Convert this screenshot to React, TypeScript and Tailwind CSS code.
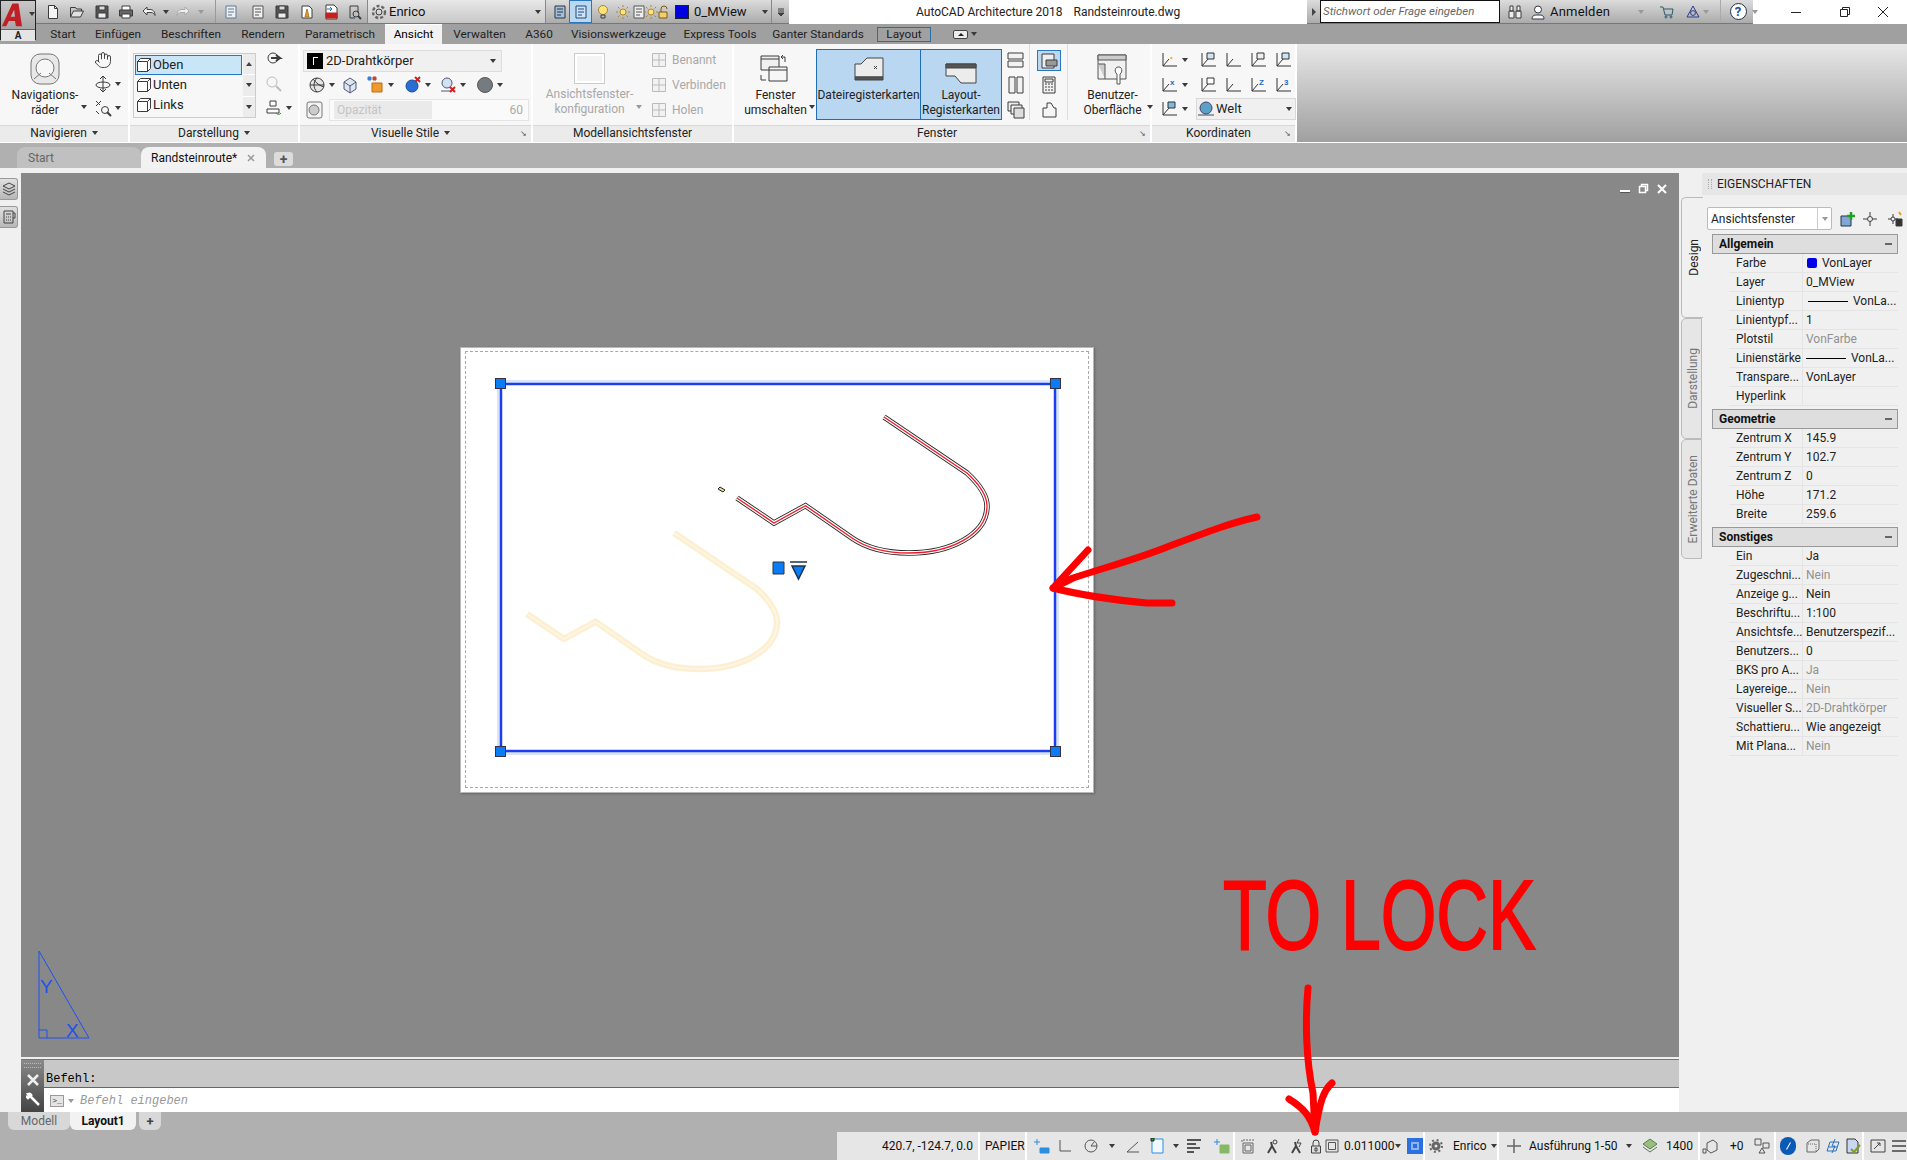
import type { ReactNode } from "react";
import { Hand } from "lucide-react";

type SvgProps = { w?: number; h?: number; className?: string; stroke?: string; children?: ReactNode };

const S = ({ w = 16, h = 16, className, stroke = "#3c3c3c", children }: SvgProps) => (
  <svg width={w} height={h} viewBox={`0 0 ${w} ${h}`} fill="none" stroke={stroke} strokeWidth="1" className={`shrink-0 ${className ?? ""}`}>
    {children}
  </svg>
);

const Dd = ({ light }: { light?: boolean }) => (
  <span className={`inline-block w-0 h-0 shrink-0 border-x-[3px] border-t-[4px] border-x-transparent ${light ? "border-t-[#999]" : "border-t-[#3a3a3a]"}`} />
);

// ---- little icons
const NewIco = () => <S><path d="M3.5 1.5h6l3 3v10h-9z" fill="#f4f4f4" /><path d="M9.5 1.5v3h3" /></S>;
const OpenIco = () => <S><path d="M1.5 13V3.5h5l1 1.5h5v2" /><path d="M1.5 13l3-6h10l-3 6z" fill="#e2e2e2" /></S>;
const SaveIco = () => <S><path d="M2 2h12v12H2z" fill="#555" /><path d="M5 2h6v4H5z" fill="#ddd" /><path d="M4 9h8v5H4z" fill="#eee" /></S>;
const PrintIco = () => <S><path d="M4 6V2h8v4" fill="#fff" /><path d="M1.5 6h13v6h-13z" fill="#666" /><path d="M4 10h8v4H4z" fill="#fff" /></S>;
const UndoIco = () => <S stroke="#444"><path d="M6 3L2 7l4 4V8.5h4c2 0 3 1 4 3 0-4-2-6-5-6H6z" fill="#f2f2f2" /></S>;
const RedoIco = () => <S stroke="#aaa"><path d="M10 3l4 4-4 4V8.5H6c-2 0-3 1-4 3 0-4 2-6 5-6h3z" fill="#eee" /></S>;
const Gear = () => <S w={18} h={18}><circle cx="9" cy="9" r="3" /><circle cx="9" cy="9" r="6" strokeDasharray="3 2" strokeWidth="2.4" stroke="#666" /></S>;
const Bulb = () => <S><circle cx="8" cy="6" r="4.5" fill="#ffe27a" stroke="#a58a2d" /><path d="M6 11h4v3H6z" fill="#bbb" /></S>;
const Sun = () => <S><circle cx="8" cy="8" r="3" fill="#ffe27a" stroke="#a58a2d" /><path d="M8 1v2M8 13v2M1 8h2M13 8h2M3 3l1.5 1.5M11.5 11.5L13 13M3 13l1.5-1.5M11.5 4.5L13 3" stroke="#a58a2d" /></S>;
const PageIco = ({ tone = "#555", fill = "#eee" }: { tone?: string; fill?: string }) => <S stroke={tone}><path d="M3 2h10v12H3z" fill={fill} /><path d="M5 5h6M5 8h6M5 11h4" /></S>;
const PdfIco = () => <S><path d="M3 1h8l3 3v11H3z" fill="#fff" /><path d="M3 9h11v5H3z" fill="#c4201c" stroke="#c4201c" /><path d="M4 5h5M7 3l2 2-2 2" stroke="#1f6fc4" /></S>;
const Cone = () => <S><path d="M3 2h7l3 3v9H3z" fill="#fff" /><path d="M6 13l2-8 2 8z" fill="#e0a030" stroke="#b07a20" /></S>;
const Search = () => <S><path d="M3 2h8v7" /><path d="M3 2v12h5" /><circle cx="9" cy="10" r="3" /><path d="M11 12l3 3" strokeWidth="2" /></S>;
const Lock = () => <S stroke="#7a5a10"><path d="M3 8h8v6H3z" fill="#f3cf70" /><path d="M5 8V5a3 3 0 016 0" /></S>;

const Slot = ({ className, children }: { className: string; children?: ReactNode }) => (
  <div className={`flex items-center justify-center shrink-0 ${className}`}>{children}</div>
);

function TitleBar() {
  return (
    <div className="flex h-[24px] shrink-0 bg-white text-[12px] text-[#111]">
      <div className="w-[36px] shrink-0" />
      <div className="w-[753px] shrink-0 flex items-center bg-gradient-to-b from-[#dcdcdc] to-[#ababab] border-b border-[#777]">
        <div className="w-[5px] shrink-0" />
        <Slot className="w-[24px]"><NewIco /></Slot>
        <Slot className="w-[24px]"><OpenIco /></Slot>
        <Slot className="w-[25px]"><SaveIco /></Slot>
        <Slot className="w-[24px]"><PrintIco /></Slot>
        <Slot className="w-[22px]"><UndoIco /></Slot>
        <Slot className="w-[11px]"><Dd /></Slot>
        <Slot className="w-[24px]"><RedoIco /></Slot>
        <Slot className="w-[12px]"><Dd light /></Slot>
        <div className="w-[9px] h-full border-r border-[#999] shrink-0" />
        <Slot className="w-[30px]"><PageIco tone="#5a7a9a" /></Slot>
        <Slot className="w-[24px]"><PageIco /></Slot>
        <Slot className="w-[24px]"><SaveIco /></Slot>
        <Slot className="w-[25px]"><Cone /></Slot>
        <Slot className="w-[24px]"><PdfIco /></Slot>
        <Slot className="w-[24px]"><Search /></Slot>
        <div className="w-[179px] shrink-0 h-full flex items-center bg-gradient-to-b from-[#e8e8e8] to-[#c8c8c8] border-x border-[#888] pl-[2px] pr-[4px]">
          <Gear />
          <span className="ml-[1px] flex-1 text-[13px]">Enrico</span>
          <Dd />
        </div>
        <div className="w-[4px] shrink-0" />
        <Slot className="w-[19px] h-full"><PageIco tone="#333" fill="#9fc0e0" /></Slot>
        <Slot className="w-[23px] h-full bg-[#bcd8f0] border border-[#2a76c0]"><PageIco tone="#1a4a80" fill="#cfe3f5" /></Slot>
        <Slot className="w-[22px]"><Bulb /></Slot>
        <Slot className="w-[18px]"><Sun /></Slot>
        <Slot className="w-[14px]"><PageIco /></Slot>
        <Slot className="w-[10px]"><Sun /></Slot>
        <Slot className="w-[16px]"><Lock /></Slot>
        <div className="w-[14px] h-[14px] shrink-0 bg-[#0000e0] border border-[#222] ml-[3px]" />
        <span className="ml-[5px] w-[68px] shrink-0 text-[13px]">0_MView</span>
        <Dd />
        <div className="w-[2px] ml-[2px] h-full border-r border-[#888] shrink-0" />
        <Slot className="flex-1 h-full"><S w={10} h={10}><path d="M2 2h6M2 4h6" /><path d="M2 6h6l-3 3z" fill="#444" /></S></Slot>
      </div>
      <div className="w-[518px] shrink-0 pl-[127px] flex items-center text-[#222]">
        <span>AutoCAD Architecture 2018</span>
        <span className="ml-[11px]">Randsteinroute.dwg</span>
      </div>
      <div className="w-[446px] shrink-0 flex items-center bg-gradient-to-b from-[#dcdcdc] to-[#ababab] border-b border-[#777]">
        <Slot className="w-[13px]"><span className="w-0 h-0 border-y-[4px] border-l-[4px] border-y-transparent border-l-[#444]" /></Slot>
        <div className="w-[180px] h-[23px] shrink-0 bg-white border border-[#111] pl-[2px] flex items-center italic text-[#666] text-[11.5px]">Stichwort oder Frage eingeben</div>
        <Slot className="w-[26px] ml-[2px]"><S><path d="M2 7h5v7H2zM9 7h5v7H9zM3 2h3v5H3zM10 2h3v5h-3z" fill="#eee" /></S></Slot>
        <Slot className="w-[20px]"><S stroke="#334"><circle cx="8" cy="5.5" r="3.5" fill="#fff" /><path d="M2 15c0-4 3-4 6-4s6 0 6 4z" fill="#fff" /></S></Slot>
        <span className="ml-[2px] w-[88px] shrink-0 text-[13px] tracking-[0.2px]">Anmelden</span>
        <Dd light />
        <Slot className="w-[32px] ml-[7px]"><S stroke="#2c5a6c"><path d="M1 3h3l2 8h7l1-6H5" /><circle cx="7" cy="13" r="1" /><circle cx="12" cy="13" r="1" /></S></Slot>
        <Slot className="w-[20px]"><S stroke="#2c3c8c"><path d="M8 2l6 11H2z" /><circle cx="8" cy="9" r="2.4" /></S></Slot>
        <Dd light />
        <div className="w-[12px] h-full border-r border-[#aaa] shrink-0" />
        <Slot className="w-[28px] ml-[3px]"><div className="w-[17px] h-[17px] rounded-full border border-[#234] bg-white text-[#1c4aa0] font-bold text-[13px] leading-[15px] text-center">?</div></Slot>
        <Dd light />
      </div>
      <div className="flex-1 flex items-center text-[#222]">
        <span className="ml-[38px] w-[10px] h-px bg-[#222]" />
        <div className="ml-[39px] w-[10px] h-[10px]"><S w={10} h={10} stroke="#222"><path d="M0.5 2.5h7v7h-7z" fill="#fff" /><path d="M2.5 2.5v-2h7v7h-2" /></S></div>
        <S w={12} h={12} stroke="#222" className="ml-[27px]"><path d="M1 1l10 10M11 1L1 11" /></S>
      </div>
    </div>
  );
}

function RibbonTabs() {
  const Tab = ({ label, className }: { label: string; className: string }) => (
    <div className={`h-full pt-px flex items-center justify-center shrink-0 ${className}`}>{label}</div>
  );
  return (
    <div className="flex h-[20px] shrink-0 bg-[#a0a0a0] text-[11.8px] text-[#222] pl-[41px]">
      <Tab label="Start" className="w-[44px]" />
      <Tab label="Einfügen" className="w-[66px]" />
      <Tab label="Beschriften" className="w-[80px]" />
      <Tab label="Rendern" className="w-[64px]" />
      <Tab label="Parametrisch" className="w-[90px]" />
      <Tab label="Ansicht" className="w-[57px] bg-[#f2f2f2] border-t border-white text-black" />
      <Tab label="Verwalten" className="w-[75px]" />
      <Tab label="A360" className="w-[44px]" />
      <Tab label="Visionswerkzeuge" className="w-[115px]" />
      <Tab label="Express Tools" className="w-[88px]" />
      <Tab label="Ganter Standards" className="w-[108px]" />
      <div className="w-[54px] shrink-0 ml-[5px] h-[15px] mt-[3px] border border-[#2a6fa8] flex items-center justify-center">Layout</div>
      <div className="ml-[22px] flex items-center gap-[3px]">
        <div className="w-[15px] h-[9px] rounded-[2px] bg-[#eee] border border-[#444] flex items-center justify-center"><span className="w-0 h-0 border-x-[3px] border-b-[3px] border-x-transparent border-b-[#222]" /></div>
        <Dd />
      </div>
    </div>
  );
}

function Panel({ title, className, arrow, titleDd, children }: { title: string; className: string; arrow?: boolean; titleDd?: boolean; children?: ReactNode }) {
  return (
    <div className={`flex flex-col shrink-0 h-full border-r-2 border-white ${className}`}>
      <div className="h-[81px] bg-[#f7f7f7] flex">{children}</div>
      <div className={`h-[17px] bg-[#ebebeb] border-t border-[#d8d8d8] pb-[2px] flex items-center justify-center relative text-[#222] ${arrow ? "pr-[10px]" : ""}`}>
        <span>{title}</span>
        {titleDd && <span className="ml-[5px] flex"><Dd /></span>}
        {arrow && <span className="absolute right-[4px] top-[4px] text-[8px] leading-[8px] text-[#555]">↘</span>}
      </div>
    </div>
  );
}

const LargeLabel = ({ a, b, gray }: { a: string; b: string; gray?: boolean }) => (
  <div className={`text-center leading-[15px] ${gray ? "text-[#a8a8a8]" : "text-[#222]"}`}>
    {a}<br />{b}
  </div>
);

const IconDd = ({ className, children }: { className: string; children: ReactNode }) => (
  <div className={`flex items-center gap-[3px] shrink-0 ${className}`}>{children}<Dd /></div>
);

const CoordIco = ({ fill, tag }: { fill?: string; tag?: string }) => (
  <S w={18} h={18} stroke="#333">
    <path d="M2 2v13h14" />
    <path d="M2 15l6-7" />
    {tag && <text x="9" y="9" fontSize="8" fontWeight="700" fill={fill ?? "#1a6ac8"} stroke="none" fontFamily="Liberation Sans">{tag}</text>}
    {!tag && fill && <path d="M7 2h7v6H7z" fill={fill} />}
  </S>
);

function Ribbon() {
  return (
    <div className="flex h-[98px] shrink-0 text-[12px] bg-white">
      <Panel title="Navigieren" titleDd className="w-[130px]">
        <div className="w-[90px] flex flex-col items-center pt-[9px] relative">
          <S w={32} h={32} stroke="#777"><rect x="2" y="1" width="28" height="30" rx="9" fill="#e8e8e8" /><circle cx="16" cy="15" r="9" fill="#f7f7f7" /><path d="M5 26l7-6M27 26l-7-6" /></S>
          <div className="mt-[3px]"><LargeLabel a="Navigations-" b="räder" /></div>
          <span className="absolute right-[3px] bottom-[16px] flex"><Dd /></span>
        </div>
        <div className="flex flex-col items-start pl-[4px] pt-[7px] gap-[6px]">
          <div className="h-[18px]"><Hand size={18} strokeWidth={1.2} color="#333" /></div>
          <IconDd className="h-[18px]"><S w={18} h={18}><path d="M9 1v16M6 4l3-3 3 3M6 14l3 3 3-3" /><ellipse cx="9" cy="10" rx="7" ry="3" /></S></IconDd>
          <IconDd className="h-[18px]"><S w={18} h={18}><path d="M2 2l4 4M7 2L2 7M2 12l3 3" /><circle cx="11" cy="11" r="3.500" /><path d="M13 13l4 4" strokeWidth="2" /></S></IconDd>
        </div>
      </Panel>
      <Panel title="Darstellung" titleDd className="w-[170px]">
        <div className="ml-[3px] mt-[9px] mb-[7px] w-[123px] border border-[#ccc] flex">
          <div className="w-[108px] flex flex-col text-[#222] pt-[1px] pl-[1px] text-[13px]">
            {["Oben", "Unten", "Links"].map((t, i) => (
              <div key={t} className={`h-[20px] flex items-center ${i === 0 ? "bg-[#c9e6f8] border border-[#2a76c0]" : "pl-px"}`}>
                <S><path d="M1.5 4.500l3-3h10v10l-3 3h-10z" fill="#fff" /><path d="M1.5 4.500h10v10M11.500 4.500l3-3" /></S>
                <span className="ml-[1px]">{t}</span>
              </div>
            ))}
          </div>
          <div className="flex-1 ml-px flex flex-col bg-[#ececec]">
            <div className="flex-1 flex items-center justify-center border-b border-white"><span className="w-0 h-0 border-x-[3px] border-b-[4px] border-x-transparent border-b-[#444]" /></div>
            <div className="flex-1 flex items-center justify-center border-b border-white"><Dd /></div>
            <div className="flex-1 flex items-center justify-center"><Dd /></div>
          </div>
        </div>
        <div className="flex flex-col pl-[9px] pt-[7px] gap-[6px]">
          <S w={18} h={18}><circle cx="8" cy="7" r="5" /><path d="M6 7h9l-4-3M11 10l4-3" strokeWidth="2" /></S>
          <S w={18} h={18} stroke="#bbb"><circle cx="7" cy="7" r="5" /><path d="M11 11l5 5" strokeWidth="2" /></S>
          <IconDd className="h-[18px]"><S w={18} h={18}><path d="M5 2h6v5H5zM2 10h12v4H2z" fill="#fff" /><path d="M11 14a3 3 0 005 0" stroke="#22a020" /></S></IconDd>
        </div>
      </Panel>
      <Panel title="Visuelle Stile" titleDd arrow className="w-[233px]">
        <div className="pl-[3px] pt-[6px] flex flex-col">
          <div className="w-[199px] h-[22px] bg-[#f0f0f0] border border-[#ddd] flex items-center pl-[3px] pr-[5px] text-[13px]">
            <div className="w-[16px] h-[16px] bg-black flex items-center justify-center"><span className="w-[5px] h-[8px] border-l border-t border-white" /></div>
            <span className="ml-[3px] flex-1 text-[#222]">2D-Drahtkörper</span>
            <Dd />
          </div>
          <div className="flex items-center mt-[4px] h-[18px] pl-[5px]">
            <IconDd className="w-[34px]"><S w={18} h={18}><circle cx="9" cy="9" r="7" fill="#e6e6e6" /><path d="M2 9h14M9 2c-4 4-4 10 0 14M5 3c3 4 7 7 11 8" /></S></IconDd>
            <S w={18} h={18} stroke="#557" className="ml-[-1px]"><path d="M3 6l6-4 6 4v7l-6 4-6-4z" fill="#dde7f0" /><path d="M3 6l6 4 6-4M9 10v7" /></S>
            <IconDd className="w-[37px] ml-[8px]"><S w={18} h={18} stroke="#c06a10"><path d="M5 7h10v9H5z" fill="#ef9a30" /><path d="M1 1h3v3H1z" fill="#3a7fd0" stroke="#3a7fd0" /><path d="M6 1h3v3H6z" fill="#d04030" stroke="#d04030" /></S></IconDd>
            <IconDd className="w-[34px]"><S w={18} h={18} stroke="#1a4aa0"><circle cx="8" cy="10" r="6" fill="#2a6fd0" /><path d="M11 1l5 5M16 1l-5 5" stroke="#d02020" strokeWidth="2" /></S></IconDd>
            <IconDd className="w-[37px] ml-[1px]"><S w={18} h={18} stroke="#557"><circle cx="8" cy="7" r="5" fill="#cfe3f5" /><path d="M2 15h9" /><path d="M11 11l5 5M16 11l-5 5" stroke="#d02020" strokeWidth="2" /></S></IconDd>
            <IconDd className="w-[30px]"><S w={18} h={18} stroke="#555"><circle cx="9" cy="9" r="7.500" fill="#747c82" /></S></IconDd>
          </div>
          <div className="flex items-center mt-[4px] h-[24px]">
            <S w={20} h={20} className="ml-[2px]" stroke="#777"><rect x="2" y="2" width="15" height="16" rx="2" fill="#f4f4f4" /><circle cx="9" cy="10" r="5" fill="#ccc" /></S>
            <div className="ml-[4px] w-[200px] h-[22px] bg-[#fafafa] border border-[#e4e4e4] flex items-center">
              <div className="ml-[4px] w-[98px] h-[18px] bg-[#eaeaea] pl-[3px] text-[#c4c4c4] flex items-center">Opazität</div>
              <span className="ml-auto mr-[5px] text-[#aaa]">60</span>
            </div>
          </div>
        </div>
      </Panel>
      <Panel title="Modellansichtsfenster" className="w-[201px]">
        <div className="w-[113px] flex flex-col items-center pt-[9px] relative shrink-0">
          <div className="w-[31px] h-[31px] bg-[#f4f4f4] border border-[#ccc] shadow-[inset_0_0_0_2px_#fff]" />
          <div className="mt-[3px]"><LargeLabel a="Ansichtsfenster-" b="konfiguration" gray /></div>
          <span className="absolute right-[4px] bottom-[16px] flex"><Dd light /></span>
        </div>
        <div className="flex flex-col pl-[5px] pt-[7px] gap-[7px] text-[#a8a8a8]">
          {["Benannt", "Verbinden", "Holen"].map((t) => (
            <div key={t} className="flex items-center h-[18px] gap-[5px]">
              <S stroke="#bbb"><path d="M1.500 1.500h13v13h-13zM8 1.500v13M1.500 8h13" fill="#f2f2f2" /></S>
              <span>{t}</span>
            </div>
          ))}
        </div>
      </Panel>
      <Panel title="Fenster" arrow className="w-[418px]">
        <div className="w-[82px] flex flex-col items-center pt-[9px] relative shrink-0">
          <S w={32} h={32}><path d="M2 3h18v14H2z" fill="#f0f0f0" /><path d="M2 6h18" /><path d="M10 14h18v14H10z" fill="#f6f6f6" /><path d="M10 17h18" /><path d="M26 9V4h-4M24 6l-2-2 2-2M2 22v5h5" /></S>
          <div className="mt-[3px] ml-[1px]"><LargeLabel a="Fenster" b="umschalten" /></div>
          <span className="absolute right-[1px] bottom-[16px] flex"><Dd /></span>
        </div>
        <div className="w-[105px] h-[71px] mt-[5px] bg-[#b9d7f1] border border-[#1f6fb8] flex flex-col items-center pt-[5px] shrink-0">
          <S w={32} h={28} stroke="#444"><path d="M2 9h6l6-6h16v19H2z" fill="#ececec" /><path d="M2 22h28v3H2z" fill="#555" /><path d="M21 11l3 3M24 11l-3 3" /></S>
          <span className="mt-[3px] text-[#222]">Dateiregisterkarten</span>
        </div>
        <div className="w-[81px] h-[71px] mt-[5px] bg-[#b9d7f1] border border-[#1f6fb8] border-l-0 flex flex-col items-center pt-[3px] shrink-0">
          <S w={32} h={28} stroke="#444" className="mt-[7px]"><path d="M1 4h30v19H16l-6-7H1z" fill="#ececec" /><path d="M1 4h30v4H1z" fill="#555" /></S>
          <LargeLabel a="Layout-" b="Registerkarten" />
        </div>
        <div className="w-[28px] flex flex-col items-center pt-[7px] gap-[7px] shrink-0 border-r border-[#ddd] mb-[5px]">
          <S w={18} h={18}><path d="M1 2h15v6H1zM1 10h15v6H1z" fill="#f2f2f2" /></S>
          <S w={18} h={18}><path d="M2 1h6v16H2zM10 1h6v16h-6z" fill="#f2f2f2" /></S>
          <S w={18} h={18}><path d="M1 1h11v9H1z" fill="#eee" /><path d="M4 4h11v9H4z" fill="#eee" /><path d="M7 7h10v10H7z" fill="#ddd" /></S>
        </div>
        <div className="w-[38px] flex flex-col items-center pt-[6px] gap-[5px] shrink-0 border-r border-[#ddd] mb-[5px]">
          <div className="w-[24px] h-[21px] bg-[#bcd8f0] border border-[#2a76c0] flex items-center justify-center"><S w={18} h={18}><path d="M2 2h12v14H2z" fill="#eee" /><path d="M6 8h11v6H6z" fill="#999" /></S></div>
          <S w={18} h={18}><path d="M3 1h12v16H3z" fill="#f2f2f2" /><path d="M5 3h8v3H5zM5 8h2M8 8h2M11 8h2M5 11h2M8 11h2M11 11h2M5 14h2M8 14h2M11 14h2" /></S>
          <S w={18} h={18} className="mt-[2px]"><path d="M3 7h4V2h4l3 5h2v9H3z" fill="#f5f5f5" /></S>
        </div>
        <div className="w-[84px] ml-[2px] flex flex-col items-center pt-[9px] relative shrink-0">
          <S w={32} h={32} stroke="#555"><path d="M2 2h28v24H2z" fill="#f1f1f1" /><path d="M2 2h28v5H2zM2 11h7v15" fill="#ccc" /><path d="M22 14c-3 0-4 5-1 7v10h3V21c3-2 2-7-1-7z" fill="#fff" /></S>
          <div className="mt-[3px] ml-[1px]"><LargeLabel a="Benutzer-" b="Oberfläche" /></div>
          <span className="absolute right-[1px] bottom-[16px] flex"><Dd /></span>
        </div>
      </Panel>
      <Panel title="Koordinaten" arrow className="w-[145px] border-r-0">
        <div className="flex flex-col pl-[9px] pt-[7px] gap-[7px] text-[#222]">
          <div className="flex items-center gap-[7px] h-[18px]">
            <IconDd className="w-[32px]"><CoordIco fill="#f0b030" tag="•" /></IconDd>
            <CoordIco fill="#cfe3f5" />
            <CoordIco />
            <CoordIco fill="#eee" />
            <CoordIco fill="#cfe3f5" />
          </div>
          <div className="flex items-center gap-[7px] h-[18px]">
            <IconDd className="w-[32px]"><CoordIco tag="x" /></IconDd>
            <CoordIco fill="#fff" />
            <CoordIco />
            <CoordIco tag="Z" />
            <CoordIco tag="3" />
          </div>
          <div className="flex items-center h-[22px] mt-[-3px]">
            <IconDd className="w-[35px]"><CoordIco fill="#7fb8e0" /></IconDd>
            <div className="w-[100px] h-[22px] bg-[#f0f0f0] border border-[#d8d8d8] flex items-center pr-[3px] text-[13px]">
              <S w={18} h={18} stroke="#446"><circle cx="9" cy="8" r="6" fill="#5aa0c8" /><path d="M1 15h16" /></S>
              <span className="flex-1 ml-[1px]">Welt</span>
              <Dd />
            </div>
          </div>
        </div>
      </Panel>
      <div className="flex-1 bg-gradient-to-b from-[#e8e8e8] to-[#a0a0a0]" />
    </div>
  );
}

function FileTabs() {
  return (
    <div className="h-[26px] shrink-0 bg-[#b0b0b0] border-t border-white flex items-end pl-[17px] text-[12px]">
      <div className="w-[124px] h-[21px] bg-[#c0c0c0] rounded-t-[8px] pl-[11px] pt-px flex items-center text-[#666]">Start</div>
      <div className="w-[125px] h-[21px] bg-[#f2f2f2] rounded-t-[8px] pl-[10px] pt-px flex items-center text-[#111]">
        <span>Randsteinroute*</span>
        <S w={8} h={8} stroke="#999" className="ml-[10px]"><path d="M1 1l6 6M7 1L1 7" strokeWidth="1.500" /></S>
      </div>
      <div className="ml-[8px] w-[19px] h-[14px] mb-[2px] bg-[#dcdcdc] rounded-[3px] flex items-center justify-center text-[#555] font-bold leading-none text-[14px]">+</div>
    </div>
  );
}

const ROUTE = "M884 417L967 473C980 485 987 495 987 506C987 535 950 553 909 553C885 553 865 547 852 538L805.500 505.700L774 523L737 498";

function Paper() {
  return (
    <div className="relative ml-[439px] mt-[174px] w-[634px] h-[446px] bg-white border border-[#b8b8b8] shadow-[1px_1px_2px_#666] px-[4px] pt-[3px] pb-[4px]">
      <div className="h-full border border-dashed border-[#aaa] pl-[34px] pt-[31px]">
        <div className="relative w-[556px] h-[369px] border-2 border-[#1e3cf0] shadow-[0_0_0_1px_#a8bcfa,0_0_0_3px_#dbe3fd,inset_0_0_0_1px_#c8d4fb]">
          <svg className="absolute left-[-2px] top-[-2px]" width="556" height="369" viewBox="500 383 556 369" fill="none">
            <g transform="translate(-210 116)" strokeLinejoin="miter">
              <path d={ROUTE} stroke="#fdf0d2" strokeWidth="6.500" />
              <path d={ROUTE} stroke="#fef7e6" strokeWidth="1.500" />
            </g>
            <path d={ROUTE} stroke="#222" strokeWidth="5.500" />
            <path d={ROUTE} stroke="#fff" strokeWidth="3.800" />
            <path d={ROUTE} stroke="#f01828" strokeWidth="1.300" />
            <path d="M720 487l5 3-2 2-5-3z" fill="#e8d8a0" stroke="#222" />
            <path d="M773 562h11v12h-11z" fill="#0a7cf8" stroke="#333" />
            <path d="M790 562h17M792 566h13l-6.500 13z" fill="#0a7cf8" stroke="#234" strokeWidth="1.500" />
          </svg>
          <span className="absolute left-[-7px] top-[-7px] w-[11px] h-[11px] bg-[#0a7cf8] border border-[#334]" />
          <span className="absolute right-[-7px] top-[-7px] w-[11px] h-[11px] bg-[#0a7cf8] border border-[#334]" />
          <span className="absolute left-[-7px] bottom-[-7px] w-[11px] h-[11px] bg-[#0a7cf8] border border-[#334]" />
          <span className="absolute right-[-7px] bottom-[-7px] w-[11px] h-[11px] bg-[#0a7cf8] border border-[#334]" />
        </div>
      </div>
    </div>
  );
}

function Canvas() {
  return (
    <div className="relative flex-1 bg-[#888888] mt-[5px] overflow-hidden">
      <Paper />
      <div className="absolute right-[12px] top-[10px] flex items-center gap-[8px]">
        <span className="w-[10px] h-[3px] bg-white mt-[6px] border-b border-[#555]" />
        <S w={11} h={11} stroke="#fff"><path d="M1.500 3.500h6v6h-6zM3.500 3.500v-2h6v6h-2" strokeWidth="1.500" /></S>
        <S w={10} h={10} stroke="#fff"><path d="M1 1l8 8M9 1L1 9" strokeWidth="2" /></S>
      </div>
      <svg className="absolute left-[17px] bottom-[11px]" width="56" height="96" viewBox="0 0 56 96" fill="none" stroke="#1e50f0">
        <path d="M1 1v87h50z" />
        <path d="M1 80h8v8" />
        <text x="2" y="43" fontSize="19" fill="#1e50f0" stroke="none" fontFamily="Liberation Sans">Y</text>
        <text x="28" y="87" fontSize="19" fill="#1e50f0" stroke="none" fontFamily="Liberation Sans">X</text>
      </svg>
    </div>
  );
}

function CommandLine() {
  return (
    <div className="h-[55px] shrink-0 flex flex-col">
      <div className="h-[2px] bg-[#efefef]" />
      <div className="flex-1 flex border-t border-[#777] [font-family:'Liberation_Mono',monospace] text-[12px]">
        <div className="w-[23px] bg-gradient-to-b from-[#8a8a8a] to-[#444] flex flex-col items-center pt-[3px]">
          <div className="w-[17px] h-[5px] border-y border-dotted border-[#bbb]" />
          <S w={12} h={12} stroke="#eee" className="mt-[6px]"><path d="M1 1l10 10M11 1L1 11" strokeWidth="2.500" /></S>
          <S w={14} h={14} stroke="#fff" className="mt-[6px]"><path d="M13 13L5 5c1-2-1-4-3-3l2 2-2 2-2-2" strokeWidth="2.500" /></S>
        </div>
        <div className="flex-1 flex flex-col">
          <div className="h-[28px] bg-[#c8c8c8] flex items-end pl-[2px] pb-[1px] leading-[14px] text-black border-b border-[#666]">Befehl:</div>
          <div className="flex-1 bg-white flex items-center pl-[6px] pt-[1px] italic text-[#999]">
            <div className="w-[14px] h-[12px] bg-[#e4e4e4] border border-[#999] text-[8px] leading-[10px] not-italic text-[#333] text-center">&gt;_</div>
            <span className="ml-[4px] mr-[6px] flex"><Dd light /></span>
            Befehl eingeben
          </div>
        </div>
      </div>
    </div>
  );
}

const PropRow = ({ label, children, gray }: { label: string; children?: ReactNode; gray?: boolean }) => (
  <div className="flex h-[19px] ml-[17px] border-b border-[#e4e4e4] text-[#222]">
    <div className="w-[74px] border-r border-[#e4e4e4] pl-[7px] leading-[19px] whitespace-nowrap overflow-hidden">{label}</div>
    <div className={`flex-1 pl-[3px] flex items-center whitespace-nowrap overflow-hidden ${gray ? "text-[#909090]" : ""}`}>{children}</div>
  </div>
);

const Group = ({ title }: { title: string }) => (
  <div className="h-[20px] bg-[#dedede] border border-[#999] flex items-center justify-between pl-[6px] pr-[5px] font-bold text-[#111]">
    <span>{title}</span>
    <span className="w-[7px] h-[2px] bg-[#666]" />
  </div>
);

const LineVal = ({ gap }: { gap: string }) => (
  <><span className={`w-[40px] h-px bg-black shrink-0 ${gap}`} /><span className="ml-[5px]">VonLa...</span></>
);

function Properties() {
  return (
    <div className="w-[228px] shrink-0 bg-[#f0f0f0] flex text-[12px]">
      <div className="w-[23px] pt-[29px] pl-[2px] shrink-0 flex flex-col text-[#444]">
        <div className="h-[121px] w-[22px] bg-[#f0f0f0] border border-r-0 border-[#bbb] rounded-l-[5px] flex items-center justify-center pl-[3px]"><span className="[writing-mode:vertical-rl] rotate-180 text-[#222]">Design</span></div>
        <div className="h-[121px] w-[21px] bg-[#e6e6e6] border border-[#bbb] rounded-l-[5px] flex items-center justify-center pl-[3px]"><span className="[writing-mode:vertical-rl] rotate-180 text-[#777]">Darstellung</span></div>
        <div className="h-[120px] w-[21px] bg-[#e6e6e6] border border-[#bbb] rounded-l-[5px] flex items-center justify-center pl-[3px]"><span className="[writing-mode:vertical-rl] rotate-180 text-[#777]">Erweiterte Daten</span></div>
      </div>
      <div className="flex-1 flex flex-col overflow-hidden">
        <div className="h-[22px] mt-[5px] bg-[#e6e6e6] flex items-center text-[#222]">
          <span className="ml-[6px] w-[4px] h-[10px] border-x border-dotted border-[#aaa]" />
          <span className="ml-[5px]">EIGENSCHAFTEN</span>
        </div>
        <div className="flex items-center mt-[12px] ml-[5px] h-[23px]">
          <div className="w-[125px] h-[23px] bg-white border border-[#bbb] rounded-[2px] flex items-center pl-[3px] text-[#222] shrink-0">
            <span className="flex-1 text-[12px]">Ansichtsfenster</span>
            <span className="w-[14px] h-full border-l border-[#ccc] flex items-center justify-center"><Dd light /></span>
          </div>
          <S className="ml-[8px]" stroke="#234"><path d="M1 5h10v10H1z" fill="#7fa8d8" /><path d="M11 1v8M7 5h8" stroke="#20a020" strokeWidth="2.500" /></S>
          <S className="ml-[6px]"><circle cx="8" cy="8" r="2.500" /><path d="M8 1v4M8 11v4M1 8h4M11 8h4" /></S>
          <S className="ml-[9px]"><circle cx="6" cy="8" r="2" /><path d="M6 3v3M6 10v3M1 8h3M8 8h3" /><path d="M9 8h6v7H9z" fill="#333" /><path d="M12 1l2 3" stroke="#e0a020" strokeWidth="2" /></S>
        </div>
        <div className="ml-[10px] mr-[9px] mt-[4px] flex flex-col">
          <Group title="Allgemein" />
          <PropRow label="Farbe"><span className="w-[10px] h-[10px] bg-[#0000e8] rounded-[2px] ml-[1px] mr-[5px]" />VonLayer</PropRow>
          <PropRow label="Layer">0_MView</PropRow>
          <PropRow label="Linientyp"><LineVal gap="ml-[2px]" /></PropRow>
          <PropRow label="Linientypf...">1</PropRow>
          <PropRow label="Plotstil" gray>VonFarbe</PropRow>
          <PropRow label="Linienstärke"><LineVal gap="" /></PropRow>
          <PropRow label="Transpare...">VonLayer</PropRow>
          <PropRow label="Hyperlink" />
          <div className="h-[3px]" />
          <Group title="Geometrie" />
          <PropRow label="Zentrum X">145.9</PropRow>
          <PropRow label="Zentrum Y">102.7</PropRow>
          <PropRow label="Zentrum Z">0</PropRow>
          <PropRow label="Höhe">171.2</PropRow>
          <PropRow label="Breite">259.6</PropRow>
          <div className="h-[3px]" />
          <Group title="Sonstiges" />
          <PropRow label="Ein">Ja</PropRow>
          <PropRow label="Zugeschni..." gray>Nein</PropRow>
          <PropRow label="Anzeige g...">Nein</PropRow>
          <PropRow label="Beschriftu...">1:100</PropRow>
          <PropRow label="Ansichtsfe...">Benutzerspezif...</PropRow>
          <PropRow label="Benutzers...">0</PropRow>
          <PropRow label="BKS pro A..." gray>Ja</PropRow>
          <PropRow label="Layereige..." gray>Nein</PropRow>
          <PropRow label="Visueller S..." gray>2D-Drahtkörper</PropRow>
          <PropRow label="Schattieru...">Wie angezeigt</PropRow>
          <PropRow label="Mit Plana..." gray>Nein</PropRow>
        </div>
      </div>
    </div>
  );
}

function StatusBar() {
  const Sep = () => <div className="w-[2px] h-full bg-white shrink-0" />;
  return (
    <div className="h-[48px] shrink-0 bg-[#b0b0b0] flex flex-col text-[12px]">
      <div className="h-[18px] flex items-stretch pl-[8px]">
        <div className="w-[62px] bg-[#d8d8d8] rounded-b-[6px] flex items-center justify-center text-[#666]">Modell</div>
        <div className="w-[66px] bg-[#f2f2f2] rounded-b-[6px] flex items-center justify-center font-bold text-[#111]">Layout1</div>
        <div className="ml-[3px] w-[22px] bg-[#d8d8d8] rounded-b-[6px] flex items-center justify-center text-[#444] font-bold text-[13px] leading-none">+</div>
      </div>
      <div className="h-[2px]" />
      <div className="flex-1 ml-[837px] bg-[#e6e6e6] flex items-center text-[#111] overflow-hidden">
        <span className="ml-[45px] w-[96px] shrink-0 whitespace-nowrap">420.7, -124.7, 0.0</span>
        <Sep />
        <span className="ml-[5px] w-[40px] shrink-0">PAPIER</span>
        <Sep />
        <Slot className="w-[30px]"><S stroke="#2a8fe0"><path d="M3 1v6M0 4h6" /><path d="M6 10h9v5H6z" fill="#2a8fe0" /></S></Slot>
        <Slot className="w-[16px]"><S stroke="#555"><path d="M3 2v11h11" /></S></Slot>
        <Slot className="w-[36px]"><S stroke="#555"><circle cx="8" cy="8" r="6" /><path d="M8 8h6M8 8l3-4" /></S></Slot>
        <Dd />
        <Slot className="w-[30px] ml-[3px]"><S stroke="#555"><path d="M2 14L13 4M2 14h12" /></S></Slot>
        <Slot className="w-[20px]"><S stroke="#2a8fe0"><path d="M2 1h11v14H2z" fill="#f2f8ff" /><path d="M1 0h3v3H1z" fill="#20a020" stroke="#222" /></S></Slot>
        <span className="ml-[5px] flex"><Dd /></span>
        <Slot className="w-[22px] ml-[4px]"><S stroke="#555"><path d="M1 2h14M1 6h9M1 10h13M1 14h7" strokeWidth="2" /></S></Slot>
        <Slot className="w-[22px] ml-[6px]"><S stroke="#2a8fe0"><path d="M3 1v6M0 4h6" /><path d="M6 7h9v8H6z" fill="#86b866" stroke="#86b866" /></S></Slot>
        <Sep />
        <Slot className="w-[25px]"><S stroke="#666"><path d="M3 2h11M2 2v3" strokeDasharray="2 1" /><path d="M3 5h10v10H3zM5 7h6v6H5z" /></S></Slot>
        <Slot className="w-[23px]"><S stroke="#444"><path d="M4 15l4-7 4 7M8 8l-1-4" strokeWidth="2" /><circle cx="11" cy="4" r="2" /></S></Slot>
        <Slot className="w-[26px]"><S stroke="#444"><path d="M4 15l4-7 4 7M8 8l-1-4" strokeWidth="2" /><path d="M11 1l-2 4h4l-2 4" /></S></Slot>
        <Slot className="w-[13px]"><S w={12} h={15} stroke="#444"><path d="M1.500 7h9v7h-9z" fill="#ddd" /><path d="M3 7V4a3 3 0 016 0v3" /><path d="M5 9h2v3H5z" /></S></Slot>
        <Slot className="w-[19px]"><S stroke="#555"><path d="M2 2h12v12H2zM4.500 4.500h7v7h-7z" /></S></Slot>
        <span className="ml-[3px] w-[51px] shrink-0">0.011000</span>
        <Dd />
        <div className="ml-[6px] w-[16px] h-[16px] shrink-0 bg-[#2a70e0] flex items-center justify-center"><span className="w-[8px] h-[8px] border-2 border-[#8ab4f0]" /></div>
        <Sep />
        <Slot className="w-[20px] ml-[1px]"><S stroke="#666"><circle cx="8" cy="8" r="3" strokeWidth="3" /><circle cx="8" cy="8" r="6" strokeDasharray="2 2.700" strokeWidth="2" /></S></Slot>
        <span className="ml-[7px] w-[38px] shrink-0">Enrico</span>
        <Dd />
        <Sep />
        <Slot className="w-[24px] ml-[3px]"><S stroke="#666"><path d="M8 1v14M1 8h14" strokeWidth="1.500" /></S></Slot>
        <span className="ml-[3px] w-[97px] shrink-0 whitespace-nowrap">Ausführung 1-50</span>
        <Dd />
        <Slot className="w-[30px] ml-[3px]"><S stroke="#5a7a5a"><path d="M8 1l7 5-7 5-7-5z" fill="#98c078" /><path d="M1 9l7 5 7-5" /></S></Slot>
        <span className="ml-[1px] w-[32px] shrink-0">1400</span>
        <Sep />
        <Slot className="w-[20px]"><S stroke="#555"><path d="M5 5l6-3 4 3v7l-6 3-4-3zM1 11h3v4H1z" /></S></Slot>
        <span className="ml-[10px] w-[20px] shrink-0">+0</span>
        <Slot className="w-[24px]"><S stroke="#555"><path d="M1 1h6v6H1zM9 5h6v5H9zM5 15l3-5 3 5z" /></S></Slot>
        <Sep />
        <Slot className="w-[32px] ml-[-4px]"><div className="w-[16px] h-[18px] rounded-full bg-[#0a5ab8] flex items-center justify-center"><span className="w-px h-[8px] bg-white rotate-[30deg]" /></div></Slot>
        <Slot className="w-[18px]"><S stroke="#666"><path d="M2 5l4-3h8v9l-3 3H2z" /><path d="M3 6h8v7" strokeDasharray="1 1" /></S></Slot>
        <Slot className="w-[22px]"><S stroke="#2a70c0"><path d="M2 13l3-9h9l-3 9zM4 9h8" /><path d="M10 1L7 8h3l-3 7" /></S></Slot>
        <Slot className="w-[18px]"><S stroke="#333"><path d="M2 1h8l3 3v11H2z" fill="#c8d8f0" /><path d="M6 11l3 3 6-7" stroke="#80a020" strokeWidth="2" /></S></Slot>
        <Sep />
        <Slot className="w-[28px]"><S stroke="#444"><path d="M1 2h14v12H1z" /><path d="M4 11l6-6M7 5h3v3" /></S></Slot>
        <Slot className="w-[14px]"><S stroke="#444"><path d="M1 3h14M1 8h14M1 13h14" strokeWidth="1.500" /></S></Slot>
      </div>
    </div>
  );
}

function Scribbles() {
  return (
    <>
      <svg className="absolute inset-0 pointer-events-none" width="1907" height="1160" viewBox="0 0 1907 1160" fill="none" stroke="#ff0000" strokeWidth="7" strokeLinecap="round" strokeLinejoin="round">
        <path d="M1257 517C1230 523 1207 532 1167 547C1140 558 1110 566 1073 578L1053 588L1088 550" />
        <path d="M1053 588C1080 595 1115 600 1147 603L1172 603" />
        <path d="M1308 988C1305 1020 1306 1060 1313 1093L1315 1132" />
        <path d="M1332 1083C1324 1090 1320 1100 1315 1132C1310 1115 1303 1108 1289 1099" />
      </svg>
      <div className="absolute left-[1223px] top-[857px] origin-left scale-x-[0.73] whitespace-nowrap text-[98px] leading-[116px] text-[#ff0000] [font-family:'Liberation_Sans',sans-serif] [-webkit-text-stroke:2px_#ff0000] pointer-events-none">
        TO LOCK
      </div>
    </>
  );
}

export default function App() {
  return (
    <div className="relative w-[1907px] h-[1160px] overflow-hidden flex flex-col bg-[#b0b0b0] [font-family:Roboto,sans-serif]">
      <TitleBar />
      <RibbonTabs />
      <Ribbon />
      <FileTabs />
      <div className="flex-1 flex min-h-0 bg-[#f0f0f0]">
        <div className="w-[21px] shrink-0 flex flex-col items-start pt-[10px] gap-[6px]">
          <div className="w-[18px] h-[22px] bg-gradient-to-b from-[#e0e0e0] to-[#b8b8b8] border border-l-0 border-[#999] rounded-r-[3px] flex items-center justify-center">
            <S w={14} h={14} stroke="#444"><path d="M1 4l6-3 6 3-6 3zM1 7l6 3 6-3M1 10l6 3 6-3" /></S>
          </div>
          <div className="w-[18px] h-[22px] bg-gradient-to-b from-[#e0e0e0] to-[#b8b8b8] border border-l-0 border-[#999] rounded-r-[3px] flex items-center justify-center">
            <S w={14} h={14} stroke="#444"><path d="M2 1h9v12H2zM4 4h5M4 7h1M6 7h1M8 7h1M4 10h1M6 10h1M8 10h1M11 3h2v5h-2" /></S>
          </div>
        </div>
        <div className="flex-1 flex flex-col min-w-0">
          <Canvas />
          <CommandLine />
        </div>
        <Properties />
      </div>
      <StatusBar />
      {/* app button sits over the title row and tab row */}
      <div className="absolute left-0 top-0 w-[36px] h-[40px] bg-gradient-to-b from-[#c8c8c8] to-[#9a9a9a] border border-[#222] flex flex-col items-center">
        <div className="flex items-center w-full h-[27px] shrink-0">
          <svg width="28" height="27" viewBox="0 0 32 27" className="shrink-0">
            <path d="M1 27L13 1h7l4 26h-7l-1-6H9l-3 6zM11 16h5l-1-8z" fill="#c11f27" />
          </svg>
          <span className="flex mt-[-2px]"><Dd /></span>
        </div>
        <div className="flex-1 w-full mt-px bg-[#e4e4e4] border-t border-[#666] text-[10px] font-bold text-center leading-[11px] text-[#222]">A</div>
      </div>
      <Scribbles />
    </div>
  );
}
